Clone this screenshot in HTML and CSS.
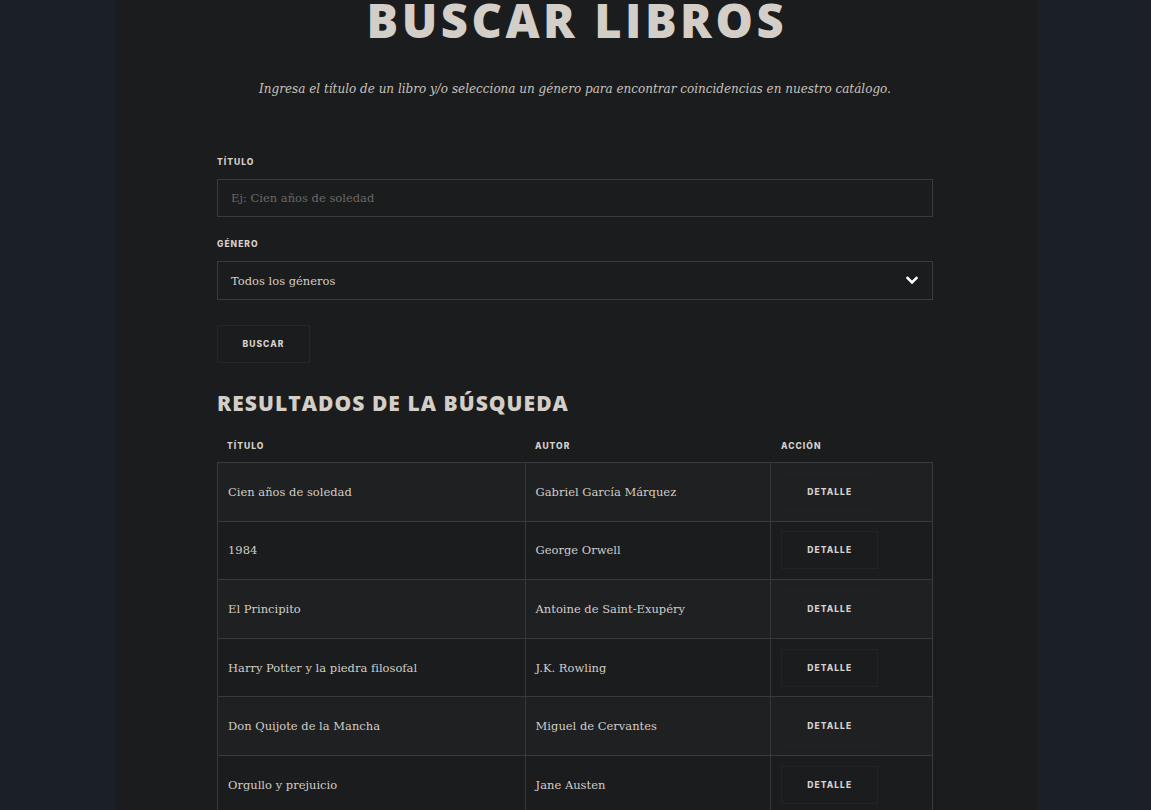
FILE: index.html
```html
<!DOCTYPE html>
<html lang="es">
<head>
<meta charset="utf-8">
<title>Buscar libros</title>
<link rel="stylesheet" href="styles.css">
</head>
<body>
<main class="page">
  <h1 class="title">BUSCAR LIBROS</h1>
  <p class="subtitle">Ingresa el título de un libro y/o selecciona un género para encontrar coincidencias en nuestro catálogo.</p>

  <form class="form">
    <label class="label" for="titulo">TÍTULO</label>
    <div class="field"><span class="placeholder">Ej: Cien años de soledad</span></div>

    <label class="label label-2">GÉNERO</label>
    <div class="field select">
      <span class="value">Todos los géneros</span>
      <svg class="chev" width="12" height="9" viewBox="0 0 12 9"><path d="M1.5 2 L6 6.5 L10.5 2" fill="none" stroke="#fff" stroke-width="2.6" stroke-linecap="square"/></svg>
    </div>

    <div class="btn-row"><span class="btn">BUSCAR</span></div>
  </form>

  <h2 class="results-title">RESULTADOS DE LA BÚSQUEDA</h2>

  <div class="table">
    <div class="thead">
      <div class="th c1">TÍTULO</div>
      <div class="th c2">AUTOR</div>
      <div class="th c3">ACCIÓN</div>
    </div>
    <div class="tbody">
      <div class="tr odd"><div class="td c1">Cien años de soledad</div><div class="td c2">Gabriel García Márquez</div><div class="td c3"><span class="btn det">DETALLE</span></div></div>
      <div class="tr"><div class="td c1">1984</div><div class="td c2">George Orwell</div><div class="td c3"><span class="btn det">DETALLE</span></div></div>
      <div class="tr odd"><div class="td c1">El Principito</div><div class="td c2">Antoine de Saint-Exupéry</div><div class="td c3"><span class="btn det">DETALLE</span></div></div>
      <div class="tr"><div class="td c1">Harry Potter y la piedra filosofal</div><div class="td c2">J.K. Rowling</div><div class="td c3"><span class="btn det">DETALLE</span></div></div>
      <div class="tr odd"><div class="td c1">Don Quijote de la Mancha</div><div class="td c2">Miguel de Cervantes</div><div class="td c3"><span class="btn det">DETALLE</span></div></div>
      <div class="tr"><div class="td c1">Orgullo y prejuicio</div><div class="td c2">Jane Austen</div><div class="td c3"><span class="btn det">DETALLE</span></div></div>
    </div>
  </div>
</main>
</body>
</html>
```

FILE: styles.css
```css
* { box-sizing: border-box; }
html, body { margin: 0; padding: 0; }
body {
  background: #1b1f26;
  color: #d2cdc6;
  font-family: "DejaVu Serif", serif;
  overflow: hidden;
  height: 810px;
}
.page {
  width: 922px;
  margin: 0 auto;
  min-height: 810px;
  background: #1b1c1e;
  padding: 0 103.5px 40px 102.5px;
}
.title {
  margin: -3px 0 0;
  font-family: "Open Sans", sans-serif;
  font-weight: 800;
  font-size: 47px;
  line-height: 1;
  letter-spacing: 0.075em;
  text-align: center;
  color: #d3cec7;
  padding-left: 0.075em;
}
.subtitle {
  margin: 36px 0 0;
  font-family: "DejaVu Serif", serif;
  font-style: italic;
  font-size: 12px;
  line-height: 18px;
  text-align: center;
  color: #c8c3bc;
}
.form {
  display: flex;
  flex-direction: column;
  margin-top: 58px;
}
.label {
  font-family: "Inter", sans-serif;
  font-weight: 800;
  font-size: 8.5px;
  letter-spacing: 0.12em;
  line-height: 12px;
  color: #d6d1ca;
}
.label-2 { margin-top: 21px; }
.field {
  margin-top: 11px;
  height: 38px;
  border: 1px solid #3a3b3d;
  background: #1b1c1e;
  display: flex;
  align-items: center;
  padding: 0 13px;
  font-size: 11.5px;
}
.select { height: 39px; justify-content: space-between; padding-right: 14px; }
.placeholder { color: #6a6865; }
.value { color: #d2cdc6; }
.chev { display: block; }
.btn-row { display: flex; margin-top: 25px; }
.btn {
  display: inline-flex;
  align-items: center;
  justify-content: center;
  height: 38px;
  width: 93px;
  border: 1px solid #242628;
  font-family: "Inter", sans-serif;
  font-weight: 800;
  font-size: 8.5px;
  letter-spacing: 0.12em;
  color: #d6d1ca;
}
.results-title {
  margin: 27px 0 0;
  font-family: "Open Sans", sans-serif;
  font-weight: 800;
  font-size: 21px;
  line-height: 26px;
  letter-spacing: 0.05em;
  color: #d3cec7;
}
.table { margin-top: 24px; }
.thead { display: flex; height: 22px; align-items: flex-start; }
.th {
  font-family: "Inter", sans-serif;
  font-weight: 800;
  font-size: 8.5px;
  letter-spacing: 0.12em;
  line-height: 12px;
  color: #d6d1ca;
  padding-left: 10px;
}
.c1 { width: 308px; }
.c2 { width: 246px; }
.c3 { width: 162px; }
.tbody { border-top: 1px solid #38393b; border-left: 1px solid #38393b; }
.tr { display: flex; height: 58.6px; border-bottom: 1px solid #38393b; }
.tr.odd { background: #1e2022; }
.td {
  display: flex;
  align-items: center;
  padding-left: 10px;
  border-right: 1px solid #38393b;
  font-size: 11.5px;
  color: #d2cdc6;
}
.td.c1 { width: 308px; }
.td.c2 { width: 246px; }
.td.c3 { width: 162px; }
.det { width: 97px; border-color: #1f2427; }
```
